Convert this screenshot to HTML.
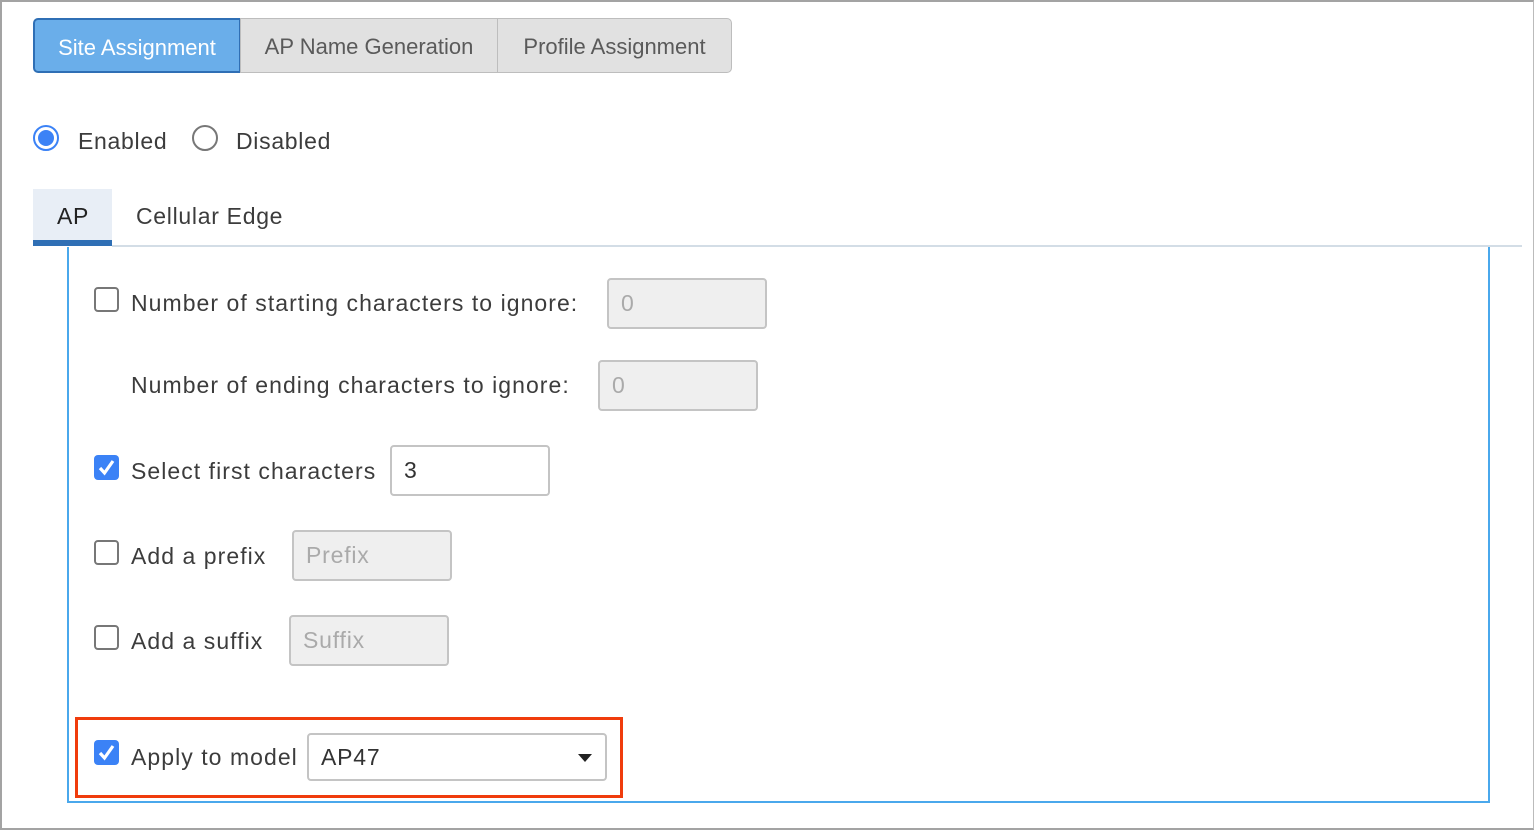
<!DOCTYPE html>
<html><head><meta charset="utf-8"><style>
*{box-sizing:border-box;margin:0;padding:0}
body{width:1534px;height:830px;background:#fff;font-family:"Liberation Sans",sans-serif;color:#3c3c3c;position:relative;overflow:hidden}
.frame{position:absolute;left:0;top:0;width:1534px;height:830px;border:2px solid #a3a3a3;border-right:1px solid #bbb}
.a{position:absolute;white-space:nowrap}
.btn{position:absolute;top:18px;height:55px;line-height:55px;font-size:22px;text-align:center;color:#5a5a5a;background:#e1e1e1;border:1.5px solid #bdbdbd}
.cb{position:absolute;width:25px;height:25px;border:2px solid #777;border-radius:4px;background:#fff}
.cbc{position:absolute;width:25px;height:25px;border-radius:4px;background:#3b82f6}
.inp{position:absolute;height:51px;border:2px solid #c4c4c4;border-radius:4px;background:#efefef;font-size:23px;color:#aaa;line-height:47px;padding-left:12px;letter-spacing:0.8px}
.t{font-size:23px;color:#3c3c3c;letter-spacing:1.05px}
.t2{font-size:23px;color:#3c3c3c;letter-spacing:0.7px}
</style></head><body>
<div class="frame"></div>
<div class="btn" style="left:33px;width:208px;background:#6aaeea;color:#fff;border:2px solid #2f6fb5;border-radius:5px 0 0 5px">Site Assignment</div>
<div class="btn" style="left:240px;width:258px">AP Name Generation</div>
<div class="btn" style="left:497px;width:235px;border-radius:0 5px 5px 0">Profile Assignment</div>

<div class="a" style="left:33px;top:125px;width:26px;height:26px;border-radius:50%;border:2px solid #3b82f6;background:#fff"><div style="position:absolute;left:3px;top:3px;width:16px;height:16px;border-radius:50%;background:#3b82f6"></div></div>
<div class="a t2" style="left:78px;top:128px">Enabled</div>
<div class="a" style="left:192px;top:125px;width:26px;height:26px;border-radius:50%;border:2px solid #777"></div>
<div class="a t2" style="left:236px;top:128px">Disabled</div>

<div class="a" style="left:33px;top:189px;width:79px;height:51px;background:#e8eef6"></div>
<div class="a" style="left:33px;top:240px;width:79px;height:6px;background:#2f6fb5"></div>
<div class="a" style="left:112px;top:245px;width:1410px;height:2px;background:#d3dde6"></div>
<div class="a t2" style="left:57px;top:203px;color:#222">AP</div>
<div class="a t2" style="left:136px;top:203px">Cellular Edge</div>

<div class="a" style="left:67px;top:247px;width:1423px;height:556px;border:2px solid #4aa8ec;border-top:none"></div>

<div class="cb" style="left:94px;top:287px"></div>
<div class="a t" style="left:131px;top:290px">Number of starting characters to ignore:</div>
<div class="inp" style="left:607px;top:278px;width:160px">0</div>
<div class="a t" style="left:131px;top:372px">Number of ending characters to ignore:</div>
<div class="inp" style="left:598px;top:360px;width:160px">0</div>

<div class="cbc" style="left:94px;top:455px"><svg width="25" height="25" viewBox="0 0 25 25"><path d="M6 13 L10.5 18 L19 6" stroke="#fff" stroke-width="3.2" fill="none"/></svg></div>
<div class="a t" style="left:131px;top:458px">Select first characters</div>
<div class="inp" style="left:390px;top:445px;width:160px;background:#fff;color:#333">3</div>

<div class="cb" style="left:94px;top:540px"></div>
<div class="a t" style="left:131px;top:543px">Add a prefix</div>
<div class="inp" style="left:292px;top:530px;width:160px">Prefix</div>

<div class="cb" style="left:94px;top:625px"></div>
<div class="a t" style="left:131px;top:628px">Add a suffix</div>
<div class="inp" style="left:289px;top:615px;width:160px">Suffix</div>

<div class="a" style="left:75px;top:717px;width:548px;height:81px;border:3px solid #f03c0c"></div>
<div class="cbc" style="left:94px;top:740px"><svg width="25" height="25" viewBox="0 0 25 25"><path d="M6 13 L10.5 18 L19 6" stroke="#fff" stroke-width="3.2" fill="none"/></svg></div>
<div class="a t" style="left:131px;top:744px">Apply to model</div>
<div class="inp" style="left:307px;top:733px;width:300px;height:48px;background:#fff;color:#333;line-height:44px">AP47</div>
<div class="a" style="left:578px;top:754px;width:0;height:0;border-left:7px solid transparent;border-right:7px solid transparent;border-top:8px solid #222"></div>
</body></html>
